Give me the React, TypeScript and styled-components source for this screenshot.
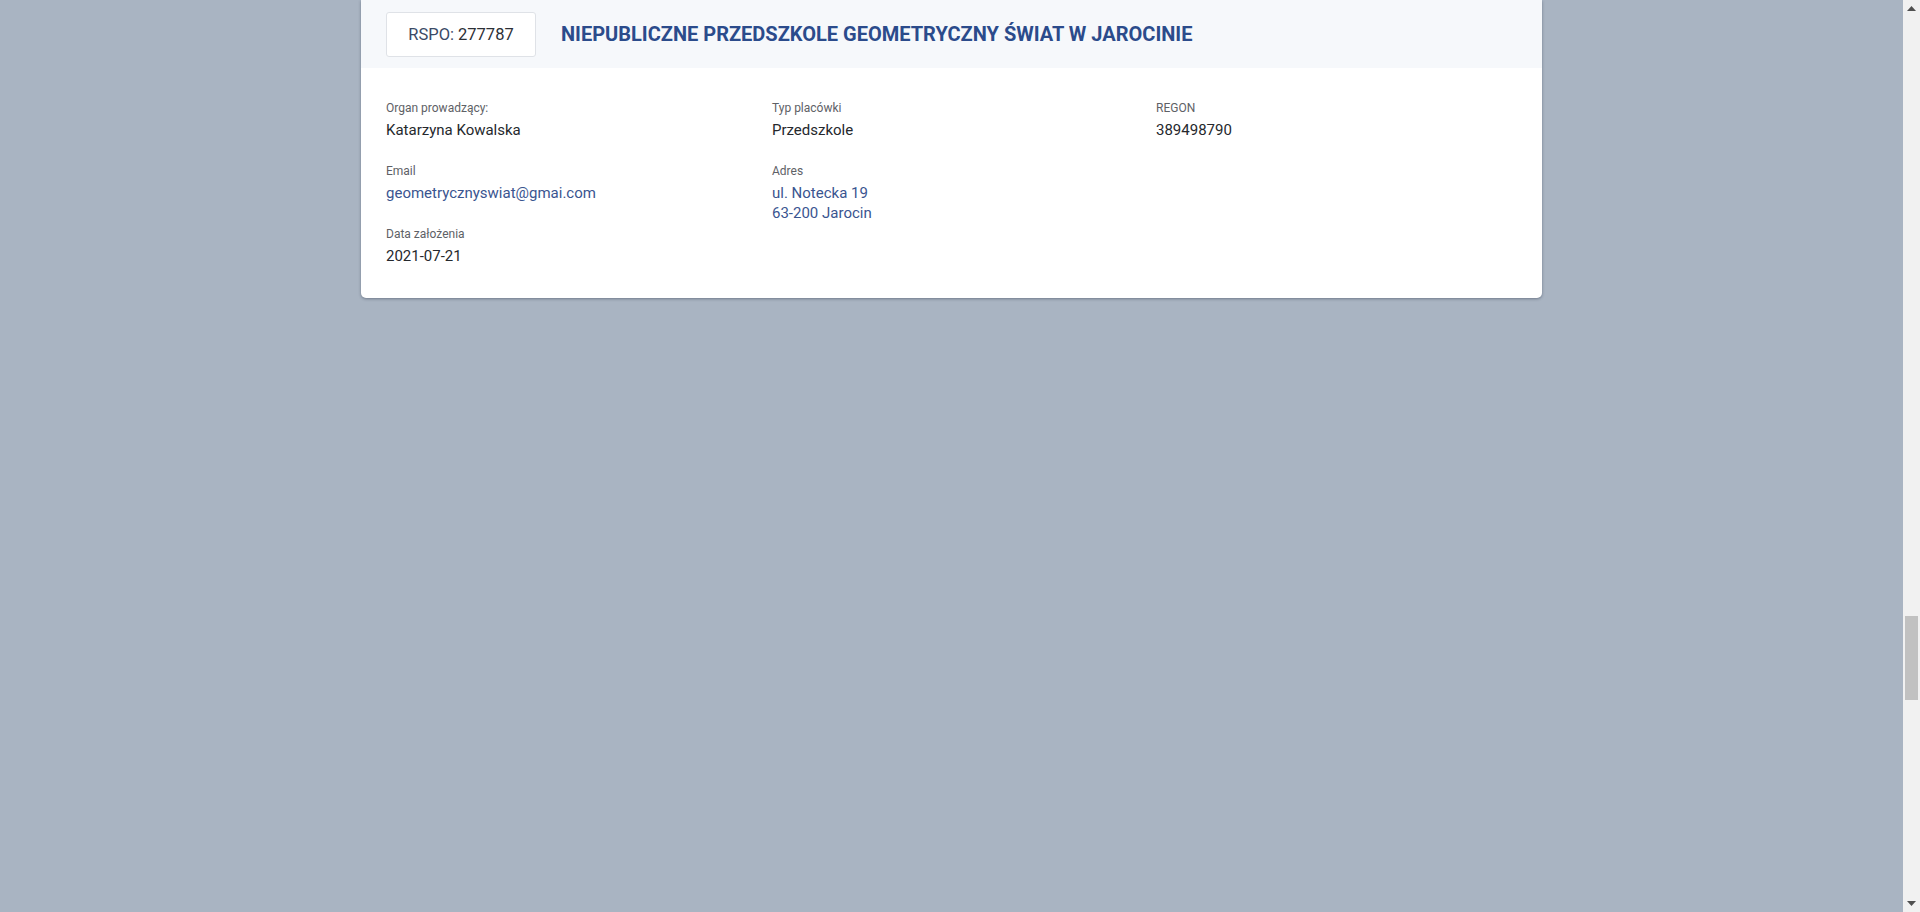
import React from "react";
import styled, { createGlobalStyle } from "styled-components";

const Global = createGlobalStyle`
  html, body { margin: 0; padding: 0; height: 100%; overflow: hidden; }
  body { font-family: Roboto, "Liberation Sans", Arial, sans-serif; background: #a9b4c2; }
`;

const Viewport = styled.div`
  display: flex;
  height: 100vh;
  width: 100vw;
`;

const Main = styled.main`
  flex: 1;
  background: #a9b4c2;
  display: flex;
  justify-content: center;
  align-items: flex-start;
`;

const Card = styled.section`
  width: 1181px;
  background: #ffffff;
  border-radius: 0 0 5px 5px;
  box-shadow: 0 1px 3px rgba(40, 50, 70, 0.45);
  overflow: hidden;
`;

const Header = styled.header`
  height: 68px;
  background: #f6f8fb;
  display: flex;
  align-items: center;
  padding: 0 25px;
  gap: 25px;
`;

const Badge = styled.div`
  box-sizing: border-box;
  width: 150px;
  height: 45px;
  margin-top: 1px;
  border: 1px solid #dfe2e7;
  border-radius: 3px;
  background: #fff;
  display: flex;
  align-items: center;
  justify-content: center;
  font-size: 16.5px;
  color: #3b4a66;
`;

const BadgeNum = styled.span`
  color: #2c2f36;
  margin-left: 4px;
`;

const Title = styled.h1`
  margin: 0;
  font-size: 20px;
  font-weight: 700;
  color: #2b4b8b;
`;

const Body = styled.div`
  display: grid;
  grid-template-columns: 386px 384px 1fr;
  padding: 31px 25px 32px;
`;

const Column = styled.div`
  display: flex;
  flex-direction: column;
  gap: 22px;
`;

const Field = styled.div`
  display: flex;
  flex-direction: column;
`;

const Label = styled.div`
  font-size: 12px;
  line-height: 18px;
  color: #5e6166;
`;

const Value = styled.div<{ $link?: boolean }>`
  font-size: 15px;
  line-height: 20px;
  margin-top: 3px;
  color: ${(p) => (p.$link ? "#3a5590" : "#25282d")};
`;

const ScrollBar = styled.div`
  width: 17px;
  background: #f1f1f1;
  display: flex;
  flex-direction: column;
  align-items: center;
`;

const Arrow = styled.div`
  height: 17px;
  width: 17px;
  display: flex;
  align-items: center;
  justify-content: center;
`;

const Track = styled.div<{ $grow: number }>`
  flex: ${(p) => p.$grow};
`;

const Thumb = styled.div`
  width: 13px;
  height: 84px;
  background: #c1c1c1;
`;

const fields1 = [
  { label: "Organ prowadzący:", value: ["Katarzyna Kowalska"] },
  { label: "Email", value: ["geometrycznyswiat@gmai.com"], link: true },
  { label: "Data założenia", value: ["2021-07-21"] },
];
const fields2 = [
  { label: "Typ placówki", value: ["Przedszkole"] },
  { label: "Adres", value: ["ul. Notecka 19", "63-200 Jarocin"], link: true },
];
const fields3 = [{ label: "REGON", value: ["389498790"] }];

type F = { label: string; value: string[]; link?: boolean };

const Col = ({ items }: { items: F[] }) => (
  <Column>
    {items.map((f) => (
      <Field key={f.label}>
        <Label>{f.label}</Label>
        <Value $link={f.link}>
          {f.value.map((v, i) => (
            <div key={i}>{v}</div>
          ))}
        </Value>
      </Field>
    ))}
  </Column>
);

export default function App() {
  return (
    <>
      <Global />
      <Viewport>
        <Main>
          <Card>
            <Header>
              <Badge>
                RSPO:<BadgeNum>277787</BadgeNum>
              </Badge>
              <Title>NIEPUBLICZNE PRZEDSZKOLE GEOMETRYCZNY ŚWIAT W JAROCINIE</Title>
            </Header>
            <Body>
              <Col items={fields1} />
              <Col items={fields2} />
              <Col items={fields3} />
            </Body>
          </Card>
        </Main>
        <ScrollBar>
          <Arrow>
            <svg width="9" height="5" viewBox="0 0 9 5">
              <path d="M0 5 L4.5 0 L9 5 Z" fill="#505050" />
            </svg>
          </Arrow>
          <Track $grow={599} />
          <Thumb />
          <Track $grow={195} />
          <Arrow>
            <svg width="9" height="5" viewBox="0 0 9 5">
              <path d="M0 0 L4.5 5 L9 0 Z" fill="#505050" />
            </svg>
          </Arrow>
        </ScrollBar>
      </Viewport>
    </>
  );
}
